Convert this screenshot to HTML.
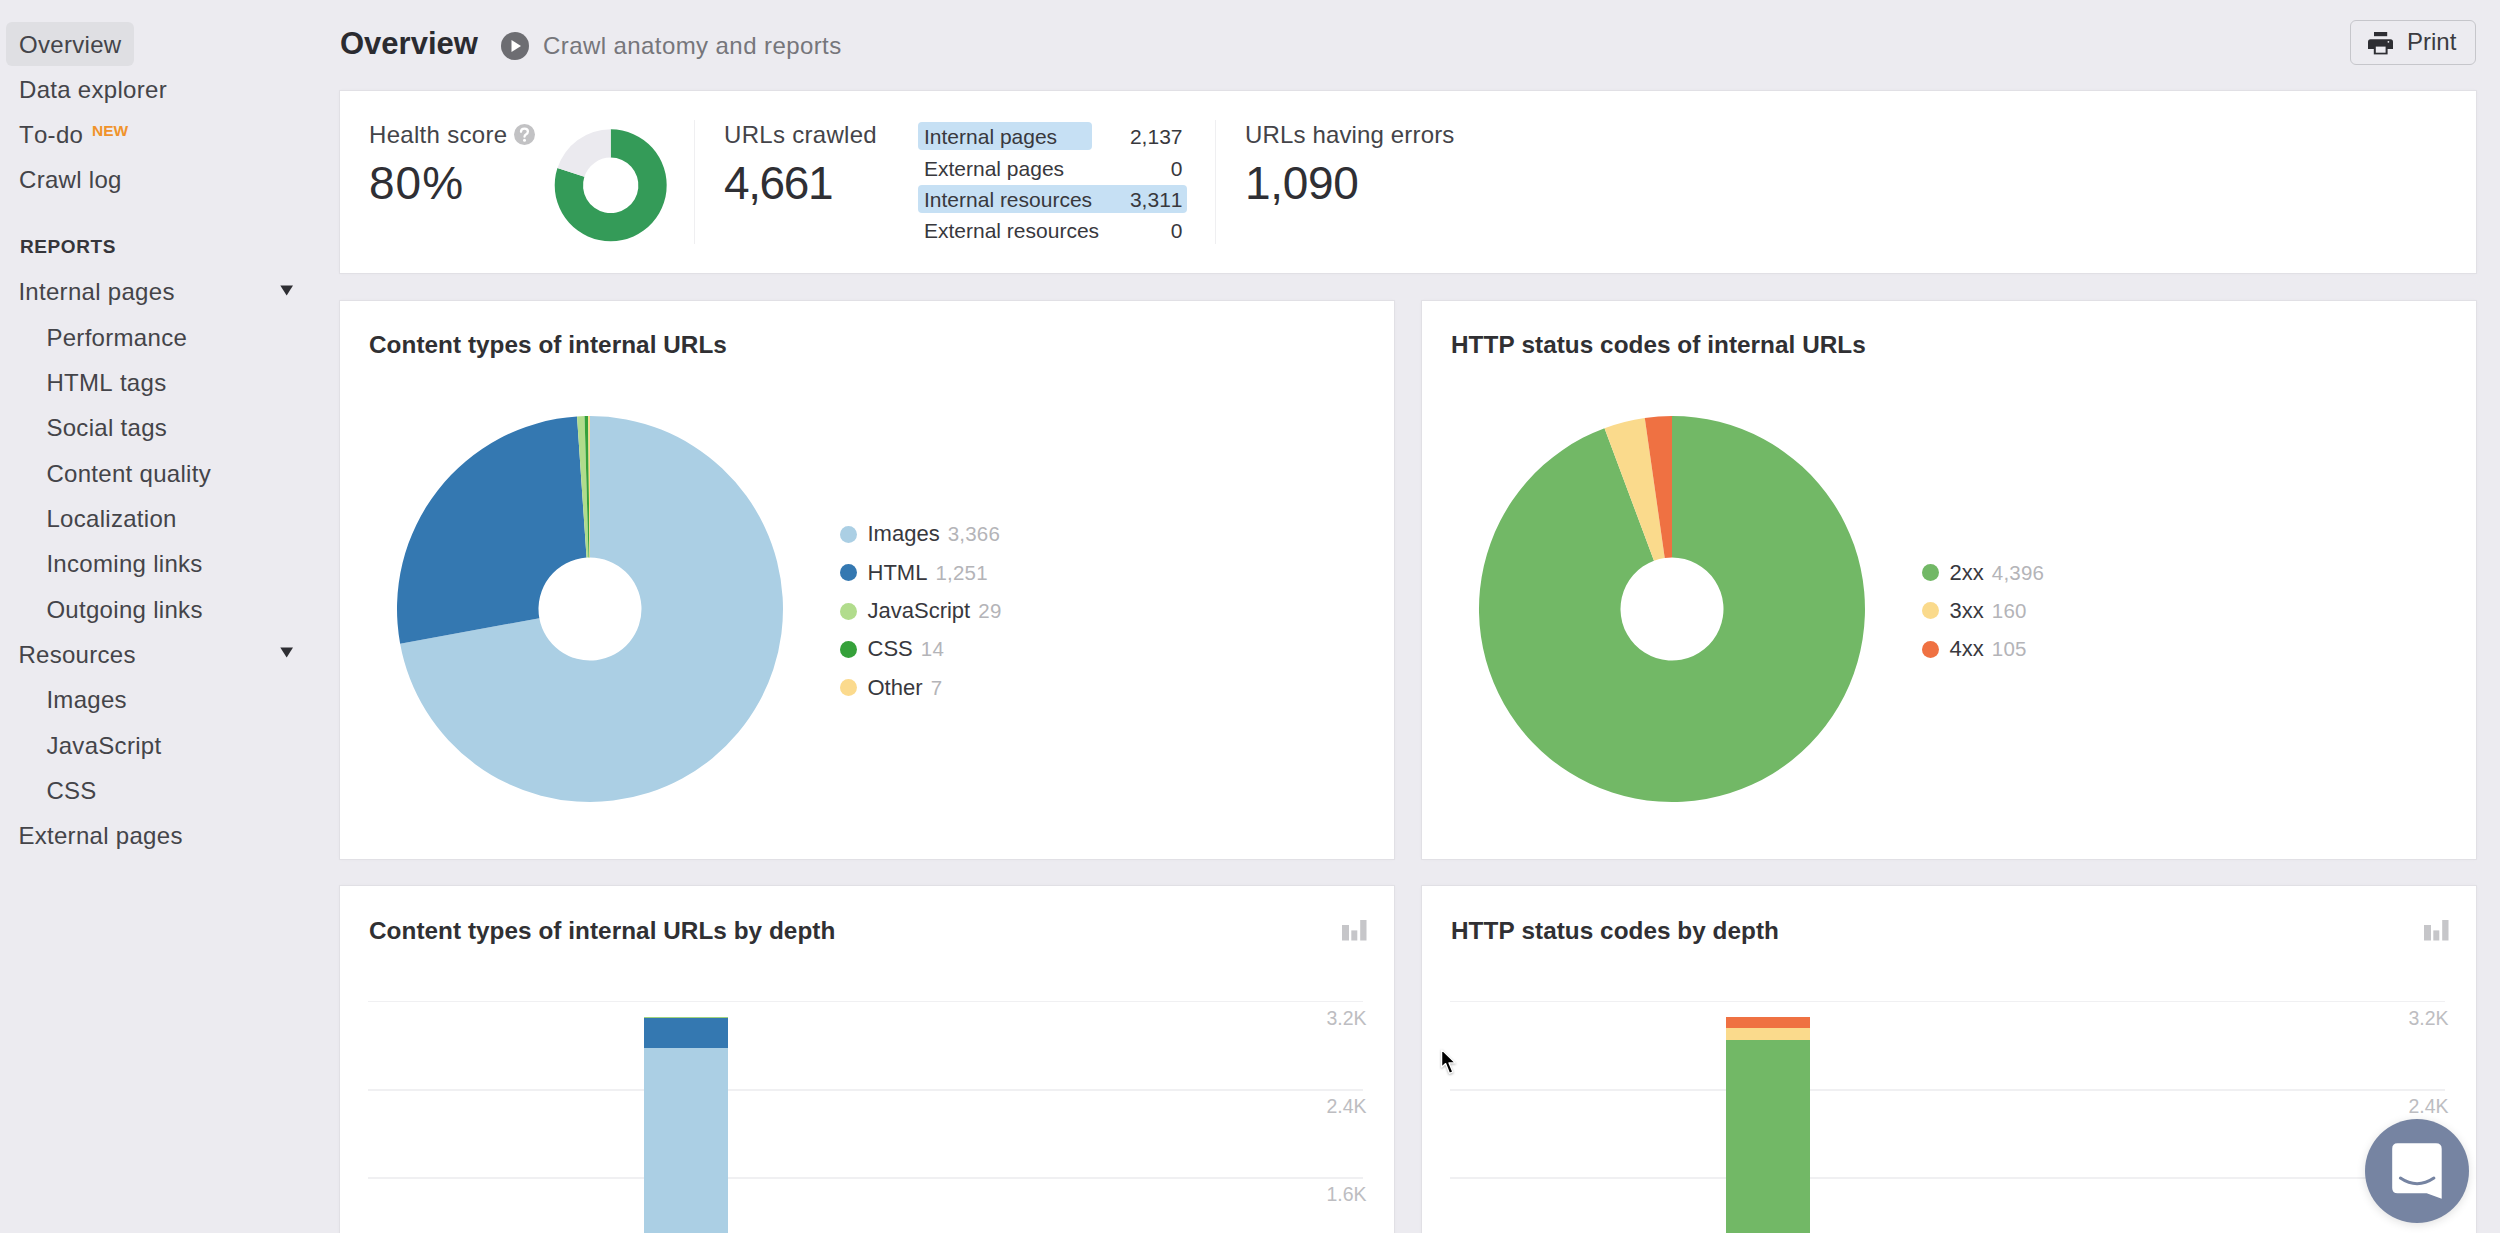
<!DOCTYPE html>
<html><head><meta charset="utf-8"><title>Overview</title>
<style>
html,body{margin:0;padding:0;}
body{width:2500px;height:1233px;overflow:hidden;position:relative;background:#ecebf0;font-family:"Liberation Sans", sans-serif;}
.t{position:absolute;white-space:nowrap;font-kerning:none;}
</style></head><body>
<div style="position:absolute;left:6px;top:22px;width:128px;height:44px;background:#dfdfe3;border-radius:6px;"></div>
<div class="t" style="left:19.0px;top:33.08px;font-size:24px;line-height:24px;color:#444449;font-weight:400;letter-spacing:0.3px;">Overview</div>
<div class="t" style="left:19.0px;top:77.68px;font-size:24px;line-height:24px;color:#444449;font-weight:400;letter-spacing:0.3px;">Data explorer</div>
<div class="t" style="left:19.0px;top:123.18px;font-size:24px;line-height:24px;color:#444449;font-weight:400;letter-spacing:0.3px;">To-do</div>
<div class="t" style="left:19.0px;top:168.18px;font-size:24px;line-height:24px;color:#444449;font-weight:400;letter-spacing:0.3px;">Crawl log</div>
<div class="t" style="left:92.0px;top:123.48px;font-size:15.5px;line-height:15.5px;color:#f0932b;font-weight:700;">NEW</div>
<div class="t" style="left:20.0px;top:237.32px;font-size:19px;line-height:19px;color:#35353a;font-weight:700;letter-spacing:0.6px;">REPORTS</div>
<div class="t" style="left:18.4px;top:280.48px;font-size:24px;line-height:24px;color:#444449;font-weight:400;letter-spacing:0.3px;">Internal pages</div>
<svg style="position:absolute;left:280px;top:284.5px" width="14" height="11" viewBox="0 0 14 11"><path d="M0.3 0.5 L13 0.5 L6.65 10.5 Z" fill="#2e2e33"/></svg>
<div class="t" style="left:46.4px;top:325.82px;font-size:24px;line-height:24px;color:#444449;font-weight:400;letter-spacing:0.3px;">Performance</div>
<div class="t" style="left:46.4px;top:371.15px;font-size:24px;line-height:24px;color:#444449;font-weight:400;letter-spacing:0.3px;">HTML tags</div>
<div class="t" style="left:46.4px;top:416.48px;font-size:24px;line-height:24px;color:#444449;font-weight:400;letter-spacing:0.3px;">Social tags</div>
<div class="t" style="left:46.4px;top:461.82px;font-size:24px;line-height:24px;color:#444449;font-weight:400;letter-spacing:0.3px;">Content quality</div>
<div class="t" style="left:46.4px;top:507.15px;font-size:24px;line-height:24px;color:#444449;font-weight:400;letter-spacing:0.3px;">Localization</div>
<div class="t" style="left:46.4px;top:552.48px;font-size:24px;line-height:24px;color:#444449;font-weight:400;letter-spacing:0.3px;">Incoming links</div>
<div class="t" style="left:46.4px;top:597.81px;font-size:24px;line-height:24px;color:#444449;font-weight:400;letter-spacing:0.3px;">Outgoing links</div>
<div class="t" style="left:18.4px;top:643.15px;font-size:24px;line-height:24px;color:#444449;font-weight:400;letter-spacing:0.3px;">Resources</div>
<svg style="position:absolute;left:280px;top:647.2px" width="14" height="11" viewBox="0 0 14 11"><path d="M0.3 0.5 L13 0.5 L6.65 10.5 Z" fill="#2e2e33"/></svg>
<div class="t" style="left:46.4px;top:688.48px;font-size:24px;line-height:24px;color:#444449;font-weight:400;letter-spacing:0.3px;">Images</div>
<div class="t" style="left:46.4px;top:733.81px;font-size:24px;line-height:24px;color:#444449;font-weight:400;letter-spacing:0.3px;">JavaScript</div>
<div class="t" style="left:46.4px;top:779.15px;font-size:24px;line-height:24px;color:#444449;font-weight:400;letter-spacing:0.3px;">CSS</div>
<div class="t" style="left:18.4px;top:824.48px;font-size:24px;line-height:24px;color:#444449;font-weight:400;letter-spacing:0.3px;">External pages</div>
<div class="t" style="left:340.0px;top:28.36px;font-size:31px;line-height:31px;color:#2b2b30;font-weight:700;">Overview</div>
<svg style="position:absolute;left:501px;top:31.6px" width="28" height="28" viewBox="0 0 28 28"><circle cx="14" cy="14" r="14" fill="#6d6d72"/><path d="M10.5 8 L20 14 L10.5 20 Z" fill="#fff"/></svg>
<div class="t" style="left:543.0px;top:34.28px;font-size:24px;line-height:24px;color:#76767b;font-weight:400;letter-spacing:0.42px;">Crawl anatomy and reports</div>
<div style="position:absolute;left:2349.5px;top:19.5px;width:126.5px;height:45px;background:transparent;box-sizing:border-box;border:1.5px solid #c6c6cb;border-radius:6px;"></div>
<svg style="position:absolute;left:2368px;top:32px" width="25" height="23" viewBox="0 0 25 23">
<rect x="6" y="0" width="13.2" height="4.2" fill="#2e2e33"/>
<path d="M2.5 7.3 H22.5 Q25 7.3 25 9.8 V17 H0 V9.8 Q0 7.3 2.5 7.3 Z" fill="#2e2e33"/>
<rect x="5.8" y="13.4" width="13.8" height="9" fill="#2e2e33"/>
<rect x="7.8" y="14.6" width="9.8" height="6.1" fill="#ecebf0"/>
<circle cx="20.4" cy="9.8" r="0.9" fill="#ecebf0"/>
</svg>
<div class="t" style="left:2407.0px;top:30.38px;font-size:24px;line-height:24px;color:#3b3b40;font-weight:400;">Print</div>
<div style="position:absolute;left:340px;top:91px;width:2136px;height:182px;background:#fff;box-shadow:0 0 0 1px rgba(0,0,0,0.03), 0 0 3px 1px rgba(0,0,0,0.025);"></div>
<div style="position:absolute;left:340px;top:301px;width:1054px;height:558px;background:#fff;box-shadow:0 0 0 1px rgba(0,0,0,0.03), 0 0 3px 1px rgba(0,0,0,0.025);"></div>
<div style="position:absolute;left:1422px;top:301px;width:1054px;height:558px;background:#fff;box-shadow:0 0 0 1px rgba(0,0,0,0.03), 0 0 3px 1px rgba(0,0,0,0.025);"></div>
<div style="position:absolute;left:340px;top:886px;width:1054px;height:400px;background:#fff;box-shadow:0 0 0 1px rgba(0,0,0,0.03), 0 0 3px 1px rgba(0,0,0,0.025);"></div>
<div style="position:absolute;left:1422px;top:886px;width:1054px;height:400px;background:#fff;box-shadow:0 0 0 1px rgba(0,0,0,0.03), 0 0 3px 1px rgba(0,0,0,0.025);"></div>
<div class="t" style="left:369.0px;top:122.88px;font-size:24px;line-height:24px;color:#444449;font-weight:400;letter-spacing:0.3px;">Health score</div>
<svg style="position:absolute;left:513.5px;top:124px" width="21" height="21" viewBox="0 0 21 21"><circle cx="10.5" cy="10.5" r="10.5" fill="#c2c2c4"/><path d="M7 7.8 Q7 4.7 10.5 4.7 Q13.9 4.7 13.9 7.5 Q13.9 9.2 12.2 10.2 Q10.5 11.2 10.5 12.7" fill="none" stroke="#fff" stroke-width="2.3" stroke-linecap="round"/><circle cx="10.5" cy="16.2" r="1.5" fill="#fff"/></svg>
<div class="t" style="left:369.0px;top:160.46px;font-size:46px;line-height:46px;color:#2f2f34;font-weight:400;letter-spacing:1.0px;">80%</div>
<svg style="position:absolute;left:0;top:0" width="2500" height="1233"><path d="M610.70 129.30 A56 56 0 1 1 557.44 168.00 L584.36 176.74 A27.7 27.7 0 1 0 610.70 157.60 Z" fill="#349b58"/><path d="M557.44 168.00 A56 56 0 0 1 610.70 129.30 L610.70 157.60 A27.7 27.7 0 0 0 584.36 176.74 Z" fill="#ebeaef"/><path d="M590.00 416.00 A193 193 0 1 1 400.14 643.69 L539.34 618.26 A51.5 51.5 0 1 0 590.00 557.50 Z" fill="#abcfe4"/><path d="M400.14 643.69 A193 193 0 0 1 577.02 416.44 L586.54 557.62 A51.5 51.5 0 0 0 539.34 618.26 Z" fill="#3478b1"/><path d="M577.02 416.44 A193 193 0 0 1 584.54 416.08 L588.54 557.52 A51.5 51.5 0 0 0 586.54 557.62 Z" fill="#b1dc8c"/><path d="M584.54 416.08 A193 193 0 0 1 588.18 416.01 L589.51 557.50 A51.5 51.5 0 0 0 588.54 557.52 Z" fill="#35a13a"/><path d="M588.18 416.01 A193 193 0 0 1 590.00 416.00 L590.00 557.50 A51.5 51.5 0 0 0 589.51 557.50 Z" fill="#fbda8d"/><path d="M1672.00 416.00 A193 193 0 1 1 1604.51 428.18 L1653.99 560.75 A51.5 51.5 0 1 0 1672.00 557.50 Z" fill="#72b866"/><path d="M1604.51 428.18 A193 193 0 0 1 1644.77 417.93 L1664.73 558.02 A51.5 51.5 0 0 0 1653.99 560.75 Z" fill="#fada8c"/><path d="M1644.77 417.93 A193 193 0 0 1 1672.00 416.00 L1672.00 557.50 A51.5 51.5 0 0 0 1664.73 558.02 Z" fill="#ef7142"/></svg>
<div style="position:absolute;left:694.2px;top:120px;width:1.2px;height:124px;background:#efeff1;"></div>
<div class="t" style="left:724.0px;top:123.38px;font-size:24px;line-height:24px;color:#444449;font-weight:400;letter-spacing:0.3px;">URLs crawled</div>
<div class="t" style="left:724.0px;top:160.26px;font-size:46px;line-height:46px;color:#2f2f34;font-weight:400;letter-spacing:-1.4px;">4,661</div>
<div style="position:absolute;left:918px;top:121.5px;width:174px;height:28.5px;background:#c6e0f4;border-radius:4px;"></div>
<div style="position:absolute;left:918px;top:184.5px;width:268.5px;height:28.5px;background:#c6e0f4;border-radius:4px;"></div>
<div class="t" style="left:924.0px;top:126.12px;font-size:21px;line-height:21px;color:#38383d;font-weight:400;">Internal pages</div>
<div class="t" style="right:1317.5px;top:126.12px;font-size:21px;line-height:21px;color:#38383d;font-weight:400;">2,137</div>
<div class="t" style="left:924.0px;top:157.52px;font-size:21px;line-height:21px;color:#38383d;font-weight:400;">External pages</div>
<div class="t" style="right:1317.5px;top:157.52px;font-size:21px;line-height:21px;color:#38383d;font-weight:400;">0</div>
<div class="t" style="left:924.0px;top:188.92px;font-size:21px;line-height:21px;color:#38383d;font-weight:400;">Internal resources</div>
<div class="t" style="right:1317.5px;top:188.92px;font-size:21px;line-height:21px;color:#38383d;font-weight:400;">3,311</div>
<div class="t" style="left:924.0px;top:220.32px;font-size:21px;line-height:21px;color:#38383d;font-weight:400;">External resources</div>
<div class="t" style="right:1317.5px;top:220.32px;font-size:21px;line-height:21px;color:#38383d;font-weight:400;">0</div>
<div style="position:absolute;left:1214.7px;top:120px;width:1.2px;height:124px;background:#efeff1;"></div>
<div class="t" style="left:1245.0px;top:123.08px;font-size:24px;line-height:24px;color:#444449;font-weight:400;letter-spacing:0.15px;">URLs having errors</div>
<div class="t" style="left:1245.0px;top:159.86px;font-size:46px;line-height:46px;color:#2f2f34;font-weight:400;letter-spacing:-0.3px;">1,090</div>
<div class="t" style="left:369.0px;top:333.03px;font-size:24.3px;line-height:24.3px;color:#303033;font-weight:700;letter-spacing:0.05px;">Content types of internal URLs</div>
<div class="t" style="left:1451.0px;top:333.03px;font-size:24.3px;line-height:24.3px;color:#303033;font-weight:700;letter-spacing:0.05px;">HTTP status codes of internal URLs</div>
<div style="position:absolute;left:839.8px;top:525.8px;width:17px;height:17px;border-radius:50%;background:#abcfe4"></div>
<div class="t" style="left:867.5px;top:523.28px;font-size:22px;line-height:22px;color:#38383d">Images <span style="color:#b4b4b8;font-size:20.5px;letter-spacing:0.2px;margin-left:2px">3,366</span></div>
<div style="position:absolute;left:839.8px;top:564.1px;width:17px;height:17px;border-radius:50%;background:#3478b1"></div>
<div class="t" style="left:867.5px;top:561.61px;font-size:22px;line-height:22px;color:#38383d">HTML <span style="color:#b4b4b8;font-size:20.5px;letter-spacing:0.2px;margin-left:2px">1,251</span></div>
<div style="position:absolute;left:839.8px;top:602.5px;width:17px;height:17px;border-radius:50%;background:#b1dc8c"></div>
<div class="t" style="left:867.5px;top:599.94px;font-size:22px;line-height:22px;color:#38383d">JavaScript <span style="color:#b4b4b8;font-size:20.5px;letter-spacing:0.2px;margin-left:2px">29</span></div>
<div style="position:absolute;left:839.8px;top:640.8px;width:17px;height:17px;border-radius:50%;background:#35a13a"></div>
<div class="t" style="left:867.5px;top:638.27px;font-size:22px;line-height:22px;color:#38383d">CSS <span style="color:#b4b4b8;font-size:20.5px;letter-spacing:0.2px;margin-left:2px">14</span></div>
<div style="position:absolute;left:839.8px;top:679.1px;width:17px;height:17px;border-radius:50%;background:#fbda8d"></div>
<div class="t" style="left:867.5px;top:676.60px;font-size:22px;line-height:22px;color:#38383d">Other <span style="color:#b4b4b8;font-size:20.5px;letter-spacing:0.2px;margin-left:2px">7</span></div>
<div style="position:absolute;left:1921.8px;top:564.1px;width:17px;height:17px;border-radius:50%;background:#72b866"></div>
<div class="t" style="left:1949.5px;top:561.58px;font-size:22px;line-height:22px;color:#38383d">2xx <span style="color:#b4b4b8;font-size:20.5px;letter-spacing:0.2px;margin-left:2px">4,396</span></div>
<div style="position:absolute;left:1921.8px;top:602.4px;width:17px;height:17px;border-radius:50%;background:#fada8c"></div>
<div class="t" style="left:1949.5px;top:599.91px;font-size:22px;line-height:22px;color:#38383d">3xx <span style="color:#b4b4b8;font-size:20.5px;letter-spacing:0.2px;margin-left:2px">160</span></div>
<div style="position:absolute;left:1921.8px;top:640.8px;width:17px;height:17px;border-radius:50%;background:#ef7142"></div>
<div class="t" style="left:1949.5px;top:638.24px;font-size:22px;line-height:22px;color:#38383d">4xx <span style="color:#b4b4b8;font-size:20.5px;letter-spacing:0.2px;margin-left:2px">105</span></div>
<div class="t" style="left:369.0px;top:919.03px;font-size:24.3px;line-height:24.3px;color:#303033;font-weight:700;letter-spacing:0.05px;">Content types of internal URLs by depth</div>
<div class="t" style="left:1451.0px;top:919.03px;font-size:24.3px;line-height:24.3px;color:#303033;font-weight:700;letter-spacing:0.05px;">HTTP status codes by depth</div>
<svg style="position:absolute;left:1342px;top:920px" width="25" height="21" viewBox="0 0 25 21"><rect x="0" y="5" width="7" height="15.5" fill="#c6c6c9"/><rect x="9.3" y="10.4" width="6" height="10.1" fill="#c6c6c9"/><rect x="18.2" y="0" width="6.3" height="20.5" fill="#c6c6c9"/></svg>
<div style="position:absolute;left:368px;top:1000.75px;width:994.5px;height:1.5px;background:#f0f0f2;"></div>
<div style="position:absolute;left:368px;top:1089.05px;width:994.5px;height:1.5px;background:#f0f0f2;"></div>
<div style="position:absolute;left:368px;top:1177.35px;width:994.5px;height:1.5px;background:#f0f0f2;"></div>
<div class="t" style="right:1133.5px;top:1008.89px;font-size:19.5px;line-height:19.5px;color:#bdbdc1;font-weight:400;">3.2K</div>
<div class="t" style="right:1133.5px;top:1097.19px;font-size:19.5px;line-height:19.5px;color:#bdbdc1;font-weight:400;">2.4K</div>
<div class="t" style="right:1133.5px;top:1185.49px;font-size:19.5px;line-height:19.5px;color:#bdbdc1;font-weight:400;">1.6K</div>
<svg style="position:absolute;left:2424px;top:920px" width="25" height="21" viewBox="0 0 25 21"><rect x="0" y="5" width="7" height="15.5" fill="#c6c6c9"/><rect x="9.3" y="10.4" width="6" height="10.1" fill="#c6c6c9"/><rect x="18.2" y="0" width="6.3" height="20.5" fill="#c6c6c9"/></svg>
<div style="position:absolute;left:1450px;top:1000.75px;width:994.5px;height:1.5px;background:#f0f0f2;"></div>
<div style="position:absolute;left:1450px;top:1089.05px;width:994.5px;height:1.5px;background:#f0f0f2;"></div>
<div style="position:absolute;left:1450px;top:1177.35px;width:994.5px;height:1.5px;background:#f0f0f2;"></div>
<div class="t" style="right:51.5px;top:1008.89px;font-size:19.5px;line-height:19.5px;color:#bdbdc1;font-weight:400;">3.2K</div>
<div class="t" style="right:51.5px;top:1097.19px;font-size:19.5px;line-height:19.5px;color:#bdbdc1;font-weight:400;">2.4K</div>
<div class="t" style="right:51.5px;top:1185.49px;font-size:19.5px;line-height:19.5px;color:#bdbdc1;font-weight:400;">1.6K</div>
<div style="position:absolute;left:644.4px;top:1016.5px;width:84.1px;height:2px;background:#9fd37e;"></div>
<div style="position:absolute;left:644.4px;top:1018px;width:84.1px;height:30px;background:#3478b1;"></div>
<div style="position:absolute;left:644.4px;top:1048px;width:84.1px;height:200px;background:#abcfe4;"></div>
<div style="position:absolute;left:1726.2px;top:1017px;width:83.8px;height:11.3px;background:#ef7142;"></div>
<div style="position:absolute;left:1726.2px;top:1028.3px;width:83.8px;height:12px;background:#fada8c;"></div>
<div style="position:absolute;left:1726.2px;top:1040.3px;width:83.8px;height:200px;background:#72b866;"></div>
<div style="position:absolute;left:2365px;top:1119px;width:104px;height:104px;border-radius:50%;background:#7684a2;box-shadow:0 2px 10px rgba(0,0,0,0.12)"></div>
<svg style="position:absolute;left:2392px;top:1143px" width="51" height="57" viewBox="0 0 51 57">
<path d="M5.5 0.2 H44 Q49.7 0.2 49.7 5.7 V55.8 L34.7 50.3 H5.5 Q0.2 50.3 0.2 45 V5.7 Q0.2 0.2 5.5 0.2 Z" fill="#fff"/>
<path d="M8.4 35 Q25.1 46.4 41.9 35" fill="none" stroke="#7684a2" stroke-width="3" stroke-linecap="round"/>
</svg>
<svg style="position:absolute;left:1438px;top:1045px" width="24" height="34" viewBox="0 0 24 34">
<path d="M3.6 4.6 L3.6 22.2 L7.6 18.6 L11.4 28.3 L14.9 26.9 L11 17.9 L17.2 17.9 Z" fill="#000" stroke="#fff" stroke-width="1.3" stroke-linejoin="round" style="filter:drop-shadow(0.5px 1.5px 1px rgba(0,0,0,0.3))"/>
</svg>
</body></html>
